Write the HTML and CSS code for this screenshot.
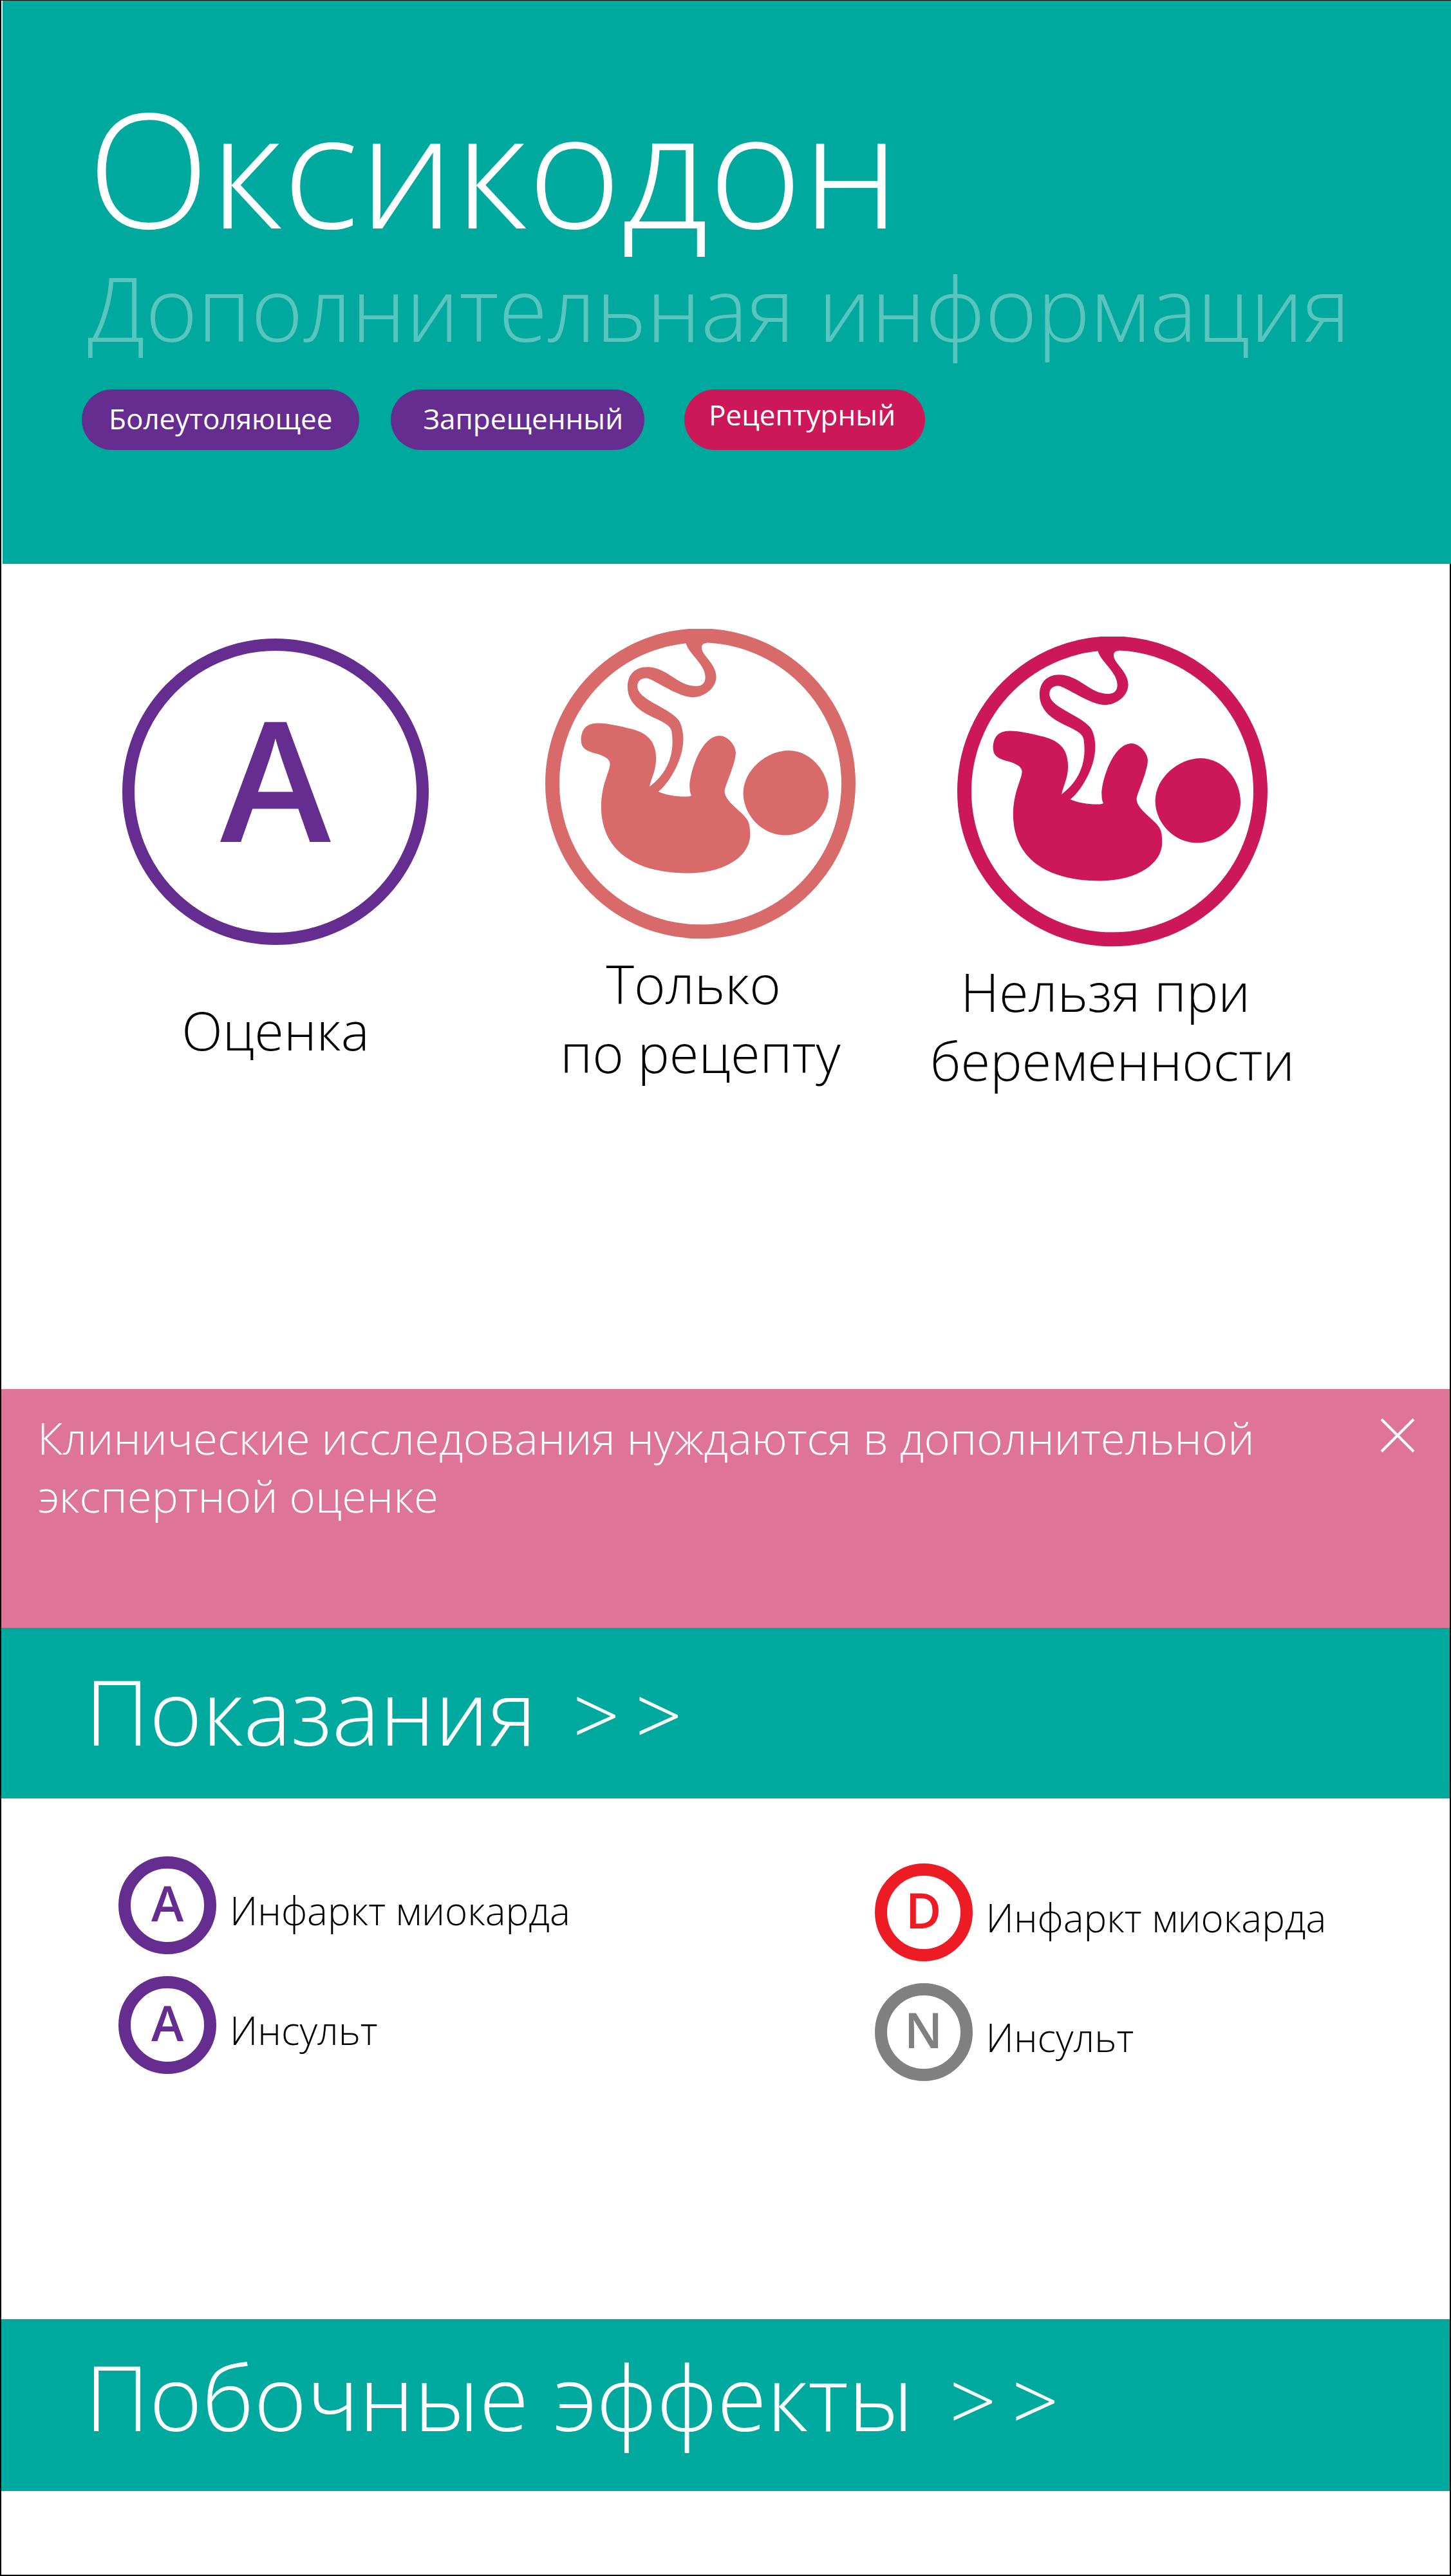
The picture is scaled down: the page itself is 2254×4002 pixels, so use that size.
FILE: index.html
```html
<!DOCTYPE html>
<html lang="ru">
<head>
  <meta charset="utf-8">
  <meta name="viewport" content="width=device-width, initial-scale=1">
  <title>Оксикодон</title>
  <link rel="stylesheet" href="styles.css">
</head>
<body>
  <svg class="sprite" aria-hidden="true">
    <symbol id="fetus" viewBox="22 20 1448 1448">
      <circle cx="746" cy="742" r="691" fill="none" stroke="currentColor" stroke-width="66"/>
      <g fill="currentColor">
        <path d="M509 756C520 705 540 680 539 620C537 550 505 508 425 487C370 474 310 459 265 460C212 461 190 490 189 540C190 575 210 588 245 598C285 608 324 622 324 650C324 685 283 745 283 850C283 1040 420 1160 690 1160C860 1160 978 1080 978 982C978 945 975 925 962 907C935 868 859 825 859 778C859 755 911 650 911 597C910 560 870 519 835 519C750 519 696 690 696 755C696 772 698 788 704 797C690 810 590 800 550 779C590 750 666 640 666 535C666 495 656 460 642 443C595 385 452 350 452 287C452 265 470 249 494 250C530 254 640 339 712 339C760 339 820 300 820 243C818 180 752 145 752 107C752 95 760 86 775 87L775 50L679 50L679 90C695 140 768 185 769 245C769 275 752 287 724 287C640 287 590 198 497 198C440 198 406 235 406 291C406 340 435 380 475 405C530 442 607 458 612 500C624 580 610 680 509 756Z"/>
        <path d="M946 787C946 680 1055 588 1158 588C1260 588 1344 685 1344 793C1344 895 1245 983 1142 983C1035 983 946 890 946 787Z"/>
      </g>
    </symbol>
  </svg>

  <main class="page">
    <header class="hero">
      <h1 class="hero__title">Оксикодон</h1>
      <p class="hero__subtitle">Дополнительная информация</p>
      <ul class="tags">
        <li class="tag">Болеутоляющее</li>
        <li class="tag tag--banned">Запрещенный</li>
        <li class="tag tag--prescription">Рецептурный</li>
      </ul>
    </header>

    <section class="features">
      <div class="feature feature--lowered">
        <div class="feature__icon"><span class="rating">A</span></div>
        <p class="feature__label feature__label--single">Оценка</p>
      </div>
      <div class="feature feature--warning">
        <svg class="feature__icon" aria-hidden="true"><use href="#fetus"/></svg>
        <p class="feature__label">Только&nbsp;<br>по рецепту</p>
      </div>
      <div class="feature feature--lowered feature--danger">
        <svg class="feature__icon" aria-hidden="true"><use href="#fetus"/></svg>
        <p class="feature__label">Нельзя при&nbsp;<br>беременности</p>
      </div>
    </section>

    <div class="notice" role="status">
      <p class="notice__text">Клинические исследования нуждаются в дополнительной экспертной оценке</p>
      <button class="notice__close" type="button" aria-label="Закрыть">
        <svg class="notice__cross" viewBox="0 0 54 54" aria-hidden="true">
          <path d="M2 2L52 52M52 2L2 52" fill="none" stroke="currentColor" stroke-width="4"/>
        </svg>
      </button>
    </div>

    <h2 class="band"><a class="band__link" href="#indications"><span>Показания</span><span class="band__arrows"><span>&gt;</span><span>&gt;</span></span></a></h2>

    <section class="indications" id="indications">
      <ul class="grades">
        <li class="grade"><span class="badge badge--a">A</span><span class="grade__name">Инфаркт миокарда</span></li>
        <li class="grade"><span class="badge badge--a">A</span><span class="grade__name">Инсульт</span></li>
      </ul>
      <ul class="grades grades--lowered">
        <li class="grade"><span class="badge badge--d">D</span><span class="grade__name">Инфаркт миокарда</span></li>
        <li class="grade"><span class="badge badge--n">N</span><span class="grade__name">Инсульт</span></li>
      </ul>
    </section>

    <h2 class="band band--effects"><a class="band__link" href="#effects"><span>Побочные эффекты</span><span class="band__arrows"><span>&gt;</span><span>&gt;</span></span></a></h2>
    <section class="effects" id="effects"></section>
  </main>
</body>
</html>
```
FILE: styles.css
```css
:root {
  --teal: #00a99d;
  --purple: #662d91;
  --crimson: #cc1859;
  --salmon: #d86a6a;
  --pink: #df7499;
  --red: #ed1c24;
  --gray: #808080;
}

*,
*::before,
*::after {
  box-sizing: border-box;
}

body {
  margin: 0;
  background: #fff;
  color: #000;
  font-family: "Open Sans", "Noto Sans", sans-serif;
  font-weight: 300;
}

h1,
h2,
p,
ul {
  margin: 0;
  padding: 0;
  font-weight: 300;
  list-style: none;
}

.sprite {
  position: absolute;
  width: 0;
  height: 0;
}

.page {
  display: flex;
  flex-direction: column;
  min-height: 100vh;
  border: 2px solid #000;
  border-top-width: 1px;
}

/* Header */

.hero {
  margin: 0 -2px 0 2px;
  padding: 134px 0 177px 123px;
  background: var(--teal);
  color: #fff;
}

.hero__title {
  padding-left: 9px;
  font-size: 248px;
  line-height: 248px;
}

.hero__subtitle {
  padding-left: 9px;
  color: #59c5be;
  font-size: 138px;
  line-height: 188px;
}

.tags {
  display: flex;
  flex-wrap: wrap;
  gap: 49px;
  margin-top: 34px;
}

.tag {
  height: 94px;
  padding: 0 42px;
  border-radius: 47px;
  background: var(--purple);
  font-size: 44px;
  font-weight: 400;
  line-height: 90px;
}

.tag--banned {
  padding: 0 33px 0 50px;
}

.tag--prescription {
  margin-left: 13px;
  padding: 0 46px 0 38px;
  background: var(--crimson);
  line-height: 78px;
}

/* Key facts */

.features {
  display: grid;
  grid-template-columns: 33fr 33fr 31fr;
  padding: 101px 214px 458px 96px;
}

.feature {
  display: flex;
  flex-direction: column;
  align-items: center;
}

.feature--lowered {
  padding-top: 12px;
}

.feature--warning {
  color: var(--salmon);
}

.feature--danger {
  color: var(--crimson);
}

.feature__icon {
  display: grid;
  place-items: center;
  width: 482px;
  height: 482px;
}

.rating {
  width: 476px;
  height: 476px;
  border: 19px solid var(--purple);
  border-radius: 50%;
  color: var(--purple);
  font-size: 260px;
  font-weight: 600;
  line-height: 392px;
  text-align: center;
}

.feature__label {
  margin-top: 15px;
  color: #000;
  font-size: 83px;
  line-height: 107px;
  text-align: center;
}

.feature__label--single {
  padding-top: 60px;
}

/* Notice */

.notice {
  display: flex;
  align-items: flex-start;
  justify-content: space-between;
  padding: 30px 54px 161px 56px;
  background: var(--pink);
  color: #fff;
}

.notice__text {
  font-size: 69px;
  line-height: 90px;
}

.notice__close {
  flex: none;
  margin: 15px 0 0 54px;
  padding: 0;
  border: 0;
  background: none;
  color: inherit;
  cursor: pointer;
}

.notice__cross {
  display: block;
  width: 54px;
  height: 54px;
}

/* Section bands */

.band {
  padding: 9px 130px 16px;
  background: var(--teal);
  font-size: 140px;
  line-height: 240px;
}

.band--effects {
  padding: 0 130px 27px;
}

.band__link {
  display: flex;
  align-items: baseline;
  gap: 56px;
  color: #fff;
  text-decoration: none;
}

.band__arrows {
  display: flex;
  gap: 24px;
  font-size: 128px;
  line-height: 150px;
}

/* Indications */

.indications {
  display: grid;
  grid-template-columns: 568fr 432fr;
  padding: 90px 0 370px 182px;
}

.grades {
  display: grid;
  align-content: start;
  gap: 34px;
}

.grades--lowered {
  padding-top: 11px;
}

.grade {
  display: flex;
  align-items: center;
  gap: 21px;
}

.badge {
  width: 152px;
  height: 152px;
  border: 19px solid currentColor;
  border-radius: 50%;
  font-size: 76px;
  font-weight: 600;
  line-height: 106px;
  text-align: center;
}

.badge--a {
  color: var(--purple);
}

.badge--d {
  color: var(--red);
}

.badge--n {
  color: var(--gray);
}

.grade__name {
  padding-top: 16px;
  font-size: 60px;
  line-height: 82px;
}

.effects {
  flex: 1;
}
```
